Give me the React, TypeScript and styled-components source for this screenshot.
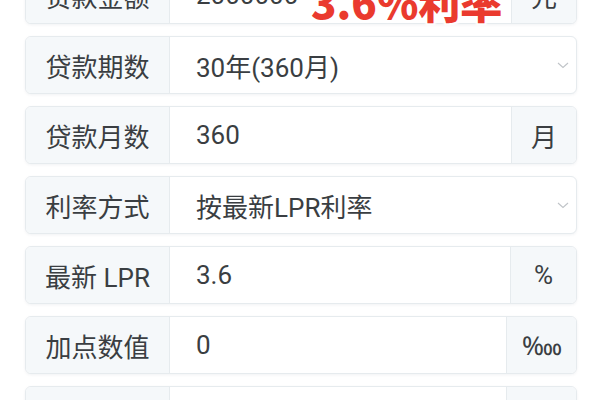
import React from "react";
import styled, { createGlobalStyle } from "styled-components";

const Global = createGlobalStyle`
  html, body { margin: 0; padding: 0; background: #ffffff; overflow: hidden; }
  body { font-family: Roboto, "Noto Sans CJK SC", sans-serif; color: #363a3d; }
  *, *::before, *::after { box-sizing: border-box; }
`;

const Page = styled.div`
  position: relative;
  width: 600px;
  height: 400px;
  overflow: hidden;
  background: #ffffff;
`;

const List = styled.div`
  display: flex;
  flex-direction: column;
  gap: 12px;
  padding: 0 23px 0 25px;
  margin-top: -34px;
`;

const Row = styled.div<{ $suffix?: number }>`
  display: grid;
  grid-template-columns: 144px 1fr ${(p) => (p.$suffix ? `${p.$suffix}px` : "0px")};
  height: 58px;
  border: 1px solid #e6ebee;
  border-radius: 6px;
  overflow: hidden;
  box-shadow: 0 1px 3px rgba(20, 40, 60, 0.06);
  background: #ffffff;
`;

const Label = styled.div`
  display: flex;
  align-items: center;
  justify-content: center;
  background: #f5f8fa;
  border-right: 1px solid #e6ebee;
  font-size: 26px;
  color: #3a3e42;
  white-space: nowrap;
`;

const Value = styled.div`
  display: flex;
  align-items: center;
  justify-content: space-between;
  padding: 0 6px 0 26px;
  font-size: 26px;
  color: #3a3e42;
  white-space: nowrap;
`;

const Suffix = styled.div`
  display: flex;
  align-items: center;
  justify-content: center;
  background: #f5f8fa;
  border-left: 1px solid #e6ebee;
  font-size: 26px;
  color: #3a3e42;
`;

const Chevron = styled.svg`
  width: 14px;
  height: 14px;
  flex: none;
`;

const Stamp = styled.div`
  position: absolute;
  left: 311px;
  top: -30px;
  font-family: "Noto Sans CJK SC", sans-serif;
  font-weight: 900;
  font-size: 42px;
  color: #ea3a2e;
  text-shadow: 0 0 3px #fff, 0 0 3px #fff, 2px 2px 2px #fff, -2px -2px 2px #fff, 2px -2px 2px #fff, -2px 2px 2px #fff;
  white-space: nowrap;
`;

const Down = () => (
  <Chevron viewBox="0 0 14 14">
    <path d="M2 5 L7 9.5 L12 5" fill="none" stroke="#c0c4c8" strokeWidth="1.1" />
  </Chevron>
);

type Item = { label: string; value: string; suffix?: string; sw?: number; select?: boolean };

const items: Item[] = [
  { label: "贷款金额", value: "2000000", suffix: "元", sw: 65 },
  { label: "贷款期数", value: "30年(360月)", select: true },
  { label: "贷款月数", value: "360", suffix: "月", sw: 65 },
  { label: "利率方式", value: "按最新LPR利率", select: true },
  { label: "最新 LPR", value: "3.6", suffix: "%", sw: 66 },
  { label: "加点数值", value: "0", suffix: "‱", sw: 70 },
  { label: "贷款利率", value: "3.6", suffix: "%", sw: 70 },
];

export default function App() {
  return (
    <Page>
      <Global />
      <List>
        {items.map((it) => (
          <Row key={it.label} $suffix={it.suffix ? it.sw : 0}>
            <Label>{it.label}</Label>
            <Value>
              <span>{it.value}</span>
              {it.select && <Down />}
            </Value>
            {it.suffix ? <Suffix>{it.suffix}</Suffix> : <span />}
          </Row>
        ))}
      </List>
      <Stamp>3.6%利率</Stamp>
    </Page>
  );
}
